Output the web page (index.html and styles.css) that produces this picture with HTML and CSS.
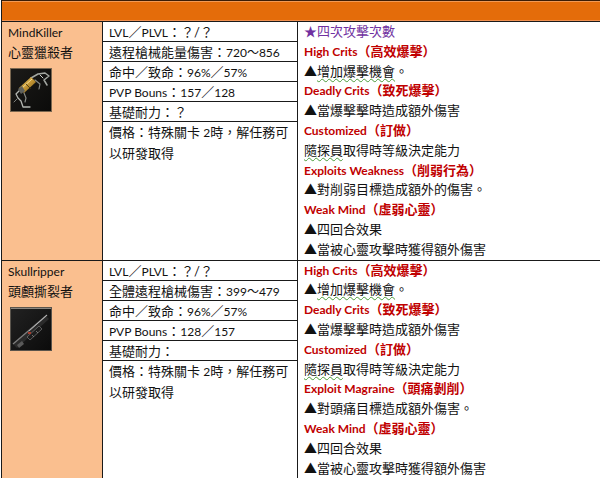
FILE: index.html
```html
<!DOCTYPE html>
<html lang="zh-Hant">
<head>
<meta charset="utf-8">
<title>武器表</title>
<link rel="stylesheet" href="styles.css">
</head>
<body>
<div class="sheet">
  <div class="header"></div>

  <div class="item">
    <div class="name">
      <div class="line"><span class="en">MindKiller</span></div>
      <div class="line">心靈獵殺者</div>
      <svg class="icon" width="42" height="44" viewBox="0 0 42 44">
        <defs>
          <linearGradient id="bg1" x1="0" y1="0" x2="1" y2="1">
            <stop offset="0" stop-color="#1b1a18"/>
            <stop offset="1" stop-color="#0b0b0a"/>
          </linearGradient>
          <linearGradient id="gold" x1="0" y1="0" x2="1" y2="1">
            <stop offset="0" stop-color="#e6c46a"/>
            <stop offset="0.5" stop-color="#c49633"/>
            <stop offset="1" stop-color="#6e5218"/>
          </linearGradient>
        </defs>
        <rect x="0.5" y="0.5" width="41" height="43" fill="url(#bg1)" stroke="#7a6750"/>
        <g fill="none" stroke-linecap="round" stroke-linejoin="round">
          <path d="M21 10 L28 6 L35 5 L39 8 L34 12 L37 17" stroke="#a3a7a2" stroke-width="1.5"/>
          <path d="M25 12 L30 16 L29 21" stroke="#858884" stroke-width="1.2"/>
          <path d="M30 7 L33 10" stroke="#d0d2ce" stroke-width="1"/>
          <path d="M10 22 L6 26 L8 30 L11 33 L13 39 L20 39" stroke="#b3b6b1" stroke-width="1.3"/>
          <path d="M14 25 L16 30 L15 34" stroke="#8d908b" stroke-width="1.1"/>
          <path d="M7 31 L4 34" stroke="#7d807b" stroke-width="1"/>
        </g>
        <path d="M9 20 L21 9 L26 14 L14 25 Z" fill="url(#gold)"/>
        <path d="M11 21 L22 11" stroke="#f3dc98" stroke-width="1" fill="none"/>
        <path d="M16 16 L21 21" stroke="#3a2c10" stroke-width="0.8" fill="none"/>
        <path d="M8 21 L12 18 L15 23 L11 26 Z" fill="#5f615d"/>
      </svg>
    </div>
    <div class="stats">
      <div class="row"><span class="en">LVL</span>／<span class="en">PLVL</span>：？/？</div>
      <div class="row">遠程槍械能量傷害：<span class="en">720～856</span></div>
      <div class="row">命中／致命：<span class="en">96%</span>／<span class="en">57%</span></div>
      <div class="row"><span class="en">PVP Bouns</span>：<span class="en">157</span>／<span class="en">128</span></div>
      <div class="row">基礎耐力：？</div>
      <div class="row price">價格：特殊關卡 <span class="en">2</span>時，解任務可<br>以研發取得</div>
    </div>
    <div class="skills">
      <div class="purple">★四次攻擊次數</div>
      <div class="red"><span class="en">High Crits</span>（高效爆擊）</div>
      <div>▲<span class="squiggle">增加爆擊機會</span>。</div>
      <div class="red"><span class="en">Deadly Crits</span>（致死爆擊）</div>
      <div>▲當爆擊擊時造成額外傷害</div>
      <div class="red"><span class="en">Customized</span>（訂做）</div>
      <div><span class="squiggle">隨探員</span>取得時等級決定能力</div>
      <div class="red"><span class="en">Exploits Weakness</span>（削弱行為）</div>
      <div>▲對削弱目標造成額外的傷害。</div>
      <div class="red"><span class="en">Weak Mind</span>（虛弱心靈）</div>
      <div>▲四回合效果</div>
      <div>▲當被心靈攻擊時獲得額外傷害</div>
    </div>
  </div>

  <div class="item">
    <div class="name">
      <div class="line"><span class="en">Skullripper</span></div>
      <div class="line">頭顱撕裂者</div>
      <svg class="icon" width="42" height="44" viewBox="0 0 42 44">
        <defs>
          <linearGradient id="bg2" x1="0" y1="0" x2="1" y2="1">
            <stop offset="0" stop-color="#222222"/>
            <stop offset="1" stop-color="#0b0b0b"/>
          </linearGradient>
        </defs>
        <rect x="0.5" y="0.5" width="41" height="43" fill="url(#bg2)" stroke="#5a544c"/>
        <path d="M1 1.5 L41 1.5" stroke="#8a8680" stroke-width="1"/>
        <path d="M3 37 L36 9 L39 12 L7 41 Z" fill="#2a2a2a"/>
        <path d="M3 37 L37 8" stroke="#7e7e7e" stroke-width="1.3" fill="none"/>
        <path d="M19 24 L37 8" stroke="#b4b4b4" stroke-width="1" fill="none"/>
        <path d="M17 30 L29 19 L32 22 L20 33 Z" fill="#1c1c1c" stroke="#6c6c6c" stroke-width="0.8"/>
        <path d="M22 28 L24 30 M26 24 L28 26" stroke="#888" stroke-width="0.8"/>
        <path d="M7 38 L12 34 L14 37 L9 41 Z" fill="#5a5a5a"/>
        <rect x="18" y="25" width="3" height="2" fill="#a8392a"/>
      </svg>
    </div>
    <div class="stats">
      <div class="row"><span class="en">LVL</span>／<span class="en">PLVL</span>：？/？</div>
      <div class="row">全體遠程槍械傷害：<span class="en">399～479</span></div>
      <div class="row">命中／致命：<span class="en">96%</span>／<span class="en">57%</span></div>
      <div class="row"><span class="en">PVP Bouns</span>：<span class="en">128</span>／<span class="en">157</span></div>
      <div class="row">基礎耐力：</div>
      <div class="row price">價格：特殊關卡 <span class="en">2</span>時，解任務可<br>以研發取得</div>
    </div>
    <div class="skills">
      <div class="red"><span class="en">High Crits</span>（高效爆擊）</div>
      <div>▲<span class="squiggle">增加爆擊機會</span>。</div>
      <div class="red"><span class="en">Deadly Crits</span>（致死爆擊）</div>
      <div>▲當爆擊擊時造成額外傷害</div>
      <div class="red"><span class="en">Customized</span>（訂做）</div>
      <div><span class="squiggle">隨探員</span>取得時等級決定能力</div>
      <div class="red"><span class="en">Exploit Magraine</span>（頭痛剝削）</div>
      <div>▲對頭痛目標造成額外傷害。</div>
      <div class="red"><span class="en">Weak Mind</span>（虛弱心靈）</div>
      <div>▲四回合效果</div>
      <div>▲當被心靈攻擊時獲得額外傷害</div>
    </div>
  </div>
</div>
</body>
</html>
```

FILE: styles.css
```css
* {
  box-sizing: border-box;
}

html, body {
  margin: 0;
  padding: 0;
  background: #ffffff;
}

body {
  width: 600px;
  height: 478px;
  overflow: hidden;
  font-family: Lato, "Noto Sans CJK TC", sans-serif;
  font-size: 13px;
  line-height: 20px;
  color: #111111;
}

.en {
  font-size: 12px;
}

.sheet {
  margin-left: 1px;
  border-left: 1px solid #1a1a1a;
}

.header {
  height: 22px;
  background: #e46c0a;
  border-top: 1px solid #3b1c05;
  border-bottom: 1px solid #1a1a1a;
  box-shadow: inset 0 1px 0 #f29a55, inset 0 -1px 0 #f09050;
}

.item {
  display: flex;
  border-bottom: 1px solid #1a1a1a;
}

.name {
  width: 101px;
  flex: none;
  background: #fabf8f;
  border-right: 1px solid #1a1a1a;
  padding-left: 6px;
}

.line {
  height: 20px;
  white-space: nowrap;
}

.icon {
  display: block;
  margin-top: 6px;
  margin-left: 2px;
}

.stats {
  width: 195px;
  flex: none;
  display: flex;
  flex-direction: column;
  border-right: 1px solid #1a1a1a;
}

.row {
  height: 20px;
  padding-left: 6px;
  border-bottom: 1px solid #1a1a1a;
  white-space: nowrap;
}

.row.price {
  flex: 1;
  border-bottom: none;
}

.skills {
  flex: 1;
  padding-left: 6px;
  line-height: 19.8px;
  white-space: nowrap;
}

.purple {
  color: #7030a0;
}

.red {
  color: #c00000;
  font-weight: 700;
}

.squiggle {
  text-decoration: underline wavy #4a9a3a;
  text-decoration-thickness: 1px;
  text-underline-offset: 2px;
}
```
